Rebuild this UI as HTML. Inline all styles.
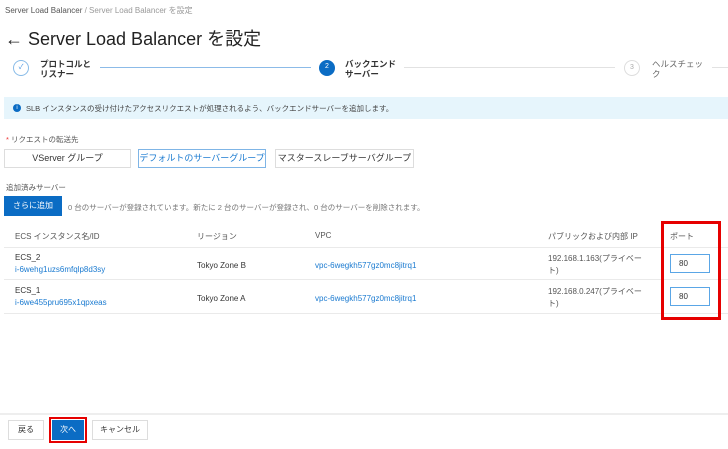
<!DOCTYPE html>
<html><head><meta charset="utf-8"><style>
*{margin:0;padding:0;box-sizing:border-box}
body{width:728px;height:449px;background:#fff;font-family:"Liberation Sans","Noto Sans CJK JP",sans-serif;color:#333;position:relative;overflow:hidden;font-size:8px}
.a{position:absolute;white-space:nowrap}
.c{position:absolute;width:16px;height:16px;border-radius:50%;font-size:7px;text-align:center;line-height:14px}
.ln{position:absolute;height:1px}
.btn{position:absolute;border:1px solid #ddd;background:#fff;text-align:center;font-size:9px;color:#333;white-space:nowrap;overflow:hidden}
.link{color:#1a7ad0}
.hr{position:absolute;left:4px;width:724px;height:1px;background:#eaeaea}
.inp{position:absolute;width:40px;height:19px;border:1px solid #5aa6e6;font-size:8px;padding-left:8px;line-height:17px}
</style></head><body>
<div class="a" style="left:5px;top:5px;color:#555">Server Load Balancer <span style="color:#999">/ Server Load Balancer を設定</span></div>
<div class="a" style="left:5px;top:25px;font-size:18px;color:#222">← Server Load Balancer を設定</div>

<div class="c" style="left:13px;top:60px;border:1px solid #88bbe8;color:#3b8ee0">✓</div>
<div class="a" style="left:40px;top:59px;font-size:8.5px;line-height:10px;font-weight:bold;color:#333">プロトコルと<br>リスナー</div>
<div class="ln" style="left:100px;top:67px;width:211px;background:#8cbbe8"></div>
<div class="c" style="left:319px;top:60px;background:#0b6cc4;color:#fff">2</div>
<div class="a" style="left:345px;top:59px;font-size:8.5px;line-height:10px;font-weight:bold;color:#333">バックエンド<br>サーバー</div>
<div class="ln" style="left:404px;top:67px;width:211px;background:#e2e2e2"></div>
<div class="c" style="left:624px;top:60px;border:1px solid #ddd;color:#aaa">3</div>
<div class="a" style="left:652px;top:59px;font-size:8.5px;line-height:10px;color:#666">ヘルスチェッ<br>ク</div>
<div class="ln" style="left:712px;top:67px;width:16px;background:#e2e2e2"></div>

<div class="a" style="left:4px;top:97px;width:724px;height:22px;background:#e6f5fc"></div>
<div class="a" style="left:13px;top:104px;width:8px;height:8px;border-radius:50%;background:#0b6cc4;color:#fff;font-size:6px;text-align:center;line-height:8px">i</div>
<div class="a" style="left:26px;top:103px;font-size:7.5px;color:#444">SLB インスタンスの受け付けたアクセスリクエストが処理されるよう、バックエンドサーバーを追加します。</div>

<div class="a" style="left:6px;top:134px;font-size:7.5px;color:#555"><span style="color:#e33">*</span> リクエストの転送先</div>
<div class="btn" style="left:4px;top:149px;width:127px;height:19px;line-height:17px">VServer グループ</div>
<div class="btn" style="left:138px;top:149px;width:128px;height:19px;line-height:17px;border-color:#7fb5e6;color:#1a7ad0">デフォルトのサーバーグループ</div>
<div class="btn" style="left:275px;top:149px;width:139px;height:19px;line-height:17px">マスタースレーブサーバグループ</div>

<div class="a" style="left:6px;top:182px;font-size:7.5px;color:#555">追加済みサーバー</div>
<div class="a" style="left:4px;top:196px;width:58px;height:20px;background:#0b6cc4;color:#fff;text-align:center;line-height:20px;font-size:8px">さらに追加</div>
<div class="a" style="left:68px;top:202px;font-size:7.5px;color:#777">0 台のサーバーが登録されています。新たに 2 台のサーバーが登録され、0 台のサーバーを削除されます。</div>

<div class="a" style="left:15px;top:231px;color:#555">ECS インスタンス名/ID</div>
<div class="a" style="left:197px;top:231px;color:#555">リージョン</div>
<div class="a" style="left:315px;top:231px;color:#555">VPC</div>
<div class="a" style="left:548px;top:231px;color:#555">パブリックおよび内部 IP</div>
<div class="a" style="left:670px;top:231px;color:#555">ポート</div>
<div class="hr" style="top:247px"></div>
<div class="a" style="left:15px;top:253px">ECS_2</div>
<div class="a link" style="left:15px;top:265px">i-6wehg1uzs6mfqlp8d3sy</div>
<div class="a" style="left:197px;top:261px">Tokyo Zone B</div>
<div class="a link" style="left:315px;top:261px">vpc-6wegkh577gz0mc8jitrq1</div>
<div class="a" style="left:548px;top:253px;line-height:12px;color:#555">192.168.1.163(プライベー<br>ト)</div>
<div class="inp" style="left:670px;top:254px">80</div>
<div class="hr" style="top:279px"></div>
<div class="a" style="left:15px;top:286px">ECS_1</div>
<div class="a link" style="left:15px;top:298px">i-6we455pru695x1qpxeas</div>
<div class="a" style="left:197px;top:294px">Tokyo Zone A</div>
<div class="a link" style="left:315px;top:294px">vpc-6wegkh577gz0mc8jitrq1</div>
<div class="a" style="left:548px;top:286px;line-height:12px;color:#555">192.168.0.247(プライベー<br>ト)</div>
<div class="inp" style="left:670px;top:287px">80</div>
<div class="hr" style="top:313px"></div>
<div class="a" style="left:661px;top:221px;width:60px;height:99px;border:3px solid #e60000"></div>

<div class="a" style="left:0;top:413px;width:728px;height:2px;background:#eee"></div>
<div class="btn" style="left:8px;top:420px;width:36px;height:20px;line-height:18px;font-size:8px">戻る</div>
<div class="a" style="left:49px;top:417px;width:38px;height:26px;border:2px solid #e60000"></div>
<div class="a" style="left:52px;top:420px;width:32px;height:20px;background:#0b6cc4;color:#fff;text-align:center;line-height:20px;font-size:8px">次へ</div>
<div class="btn" style="left:92px;top:420px;width:56px;height:20px;line-height:18px;font-size:8px">キャンセル</div>
</body></html>
